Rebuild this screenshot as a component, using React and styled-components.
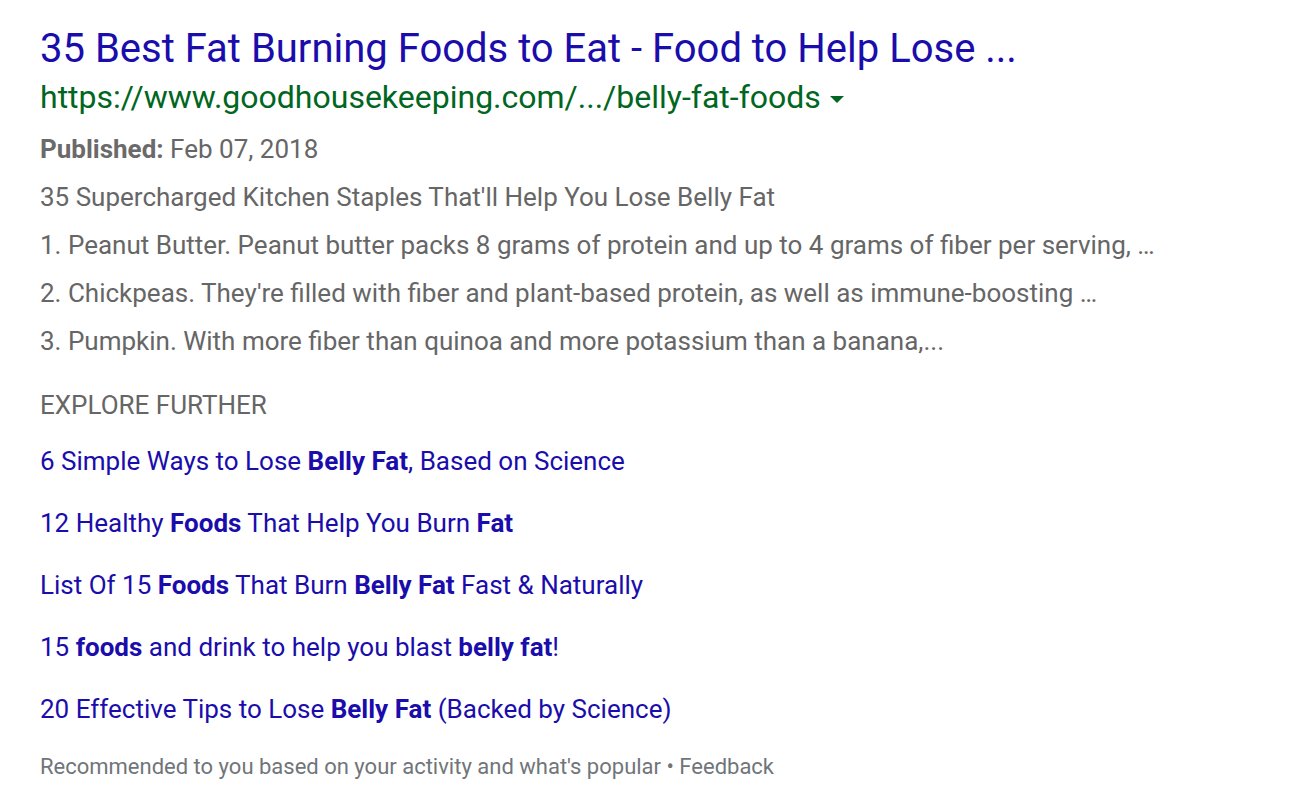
import React from "react";
import styled, { createGlobalStyle } from "styled-components";

const GlobalStyle = createGlobalStyle`
  body {
    margin: 0;
    background: #fff;
    font-family: Roboto, "Liberation Sans", Arial, sans-serif;
  }
`;

const Result = styled.div`
  padding: 24px 40px 0;
  display: flex;
  flex-direction: column;
`;

const Title = styled.a`
  color: #1a0dab;
  font-size: 40px;
  line-height: 50px;
  text-decoration: none;
`;

const Url = styled.div`
  display: flex;
  align-items: center;
  color: #006621;
  font-size: 32px;
  line-height: 46px;
`;

const Caret = styled.span`
  display: inline-block;
  margin-left: 9px;
  margin-top: 4px;
  width: 0;
  height: 0;
  border-left: 7px solid transparent;
  border-right: 7px solid transparent;
  border-top: 7px solid #006621;
`;

const Snippet = styled.div`
  margin-top: 5px;
  color: #666;
  font-size: 26px;
  line-height: 48px;
`;

const Line = styled.div`
  white-space: nowrap;
`;

const Label = styled.b`
  color: #6a6a6a;
  font-weight: 700;
`;

const Explore = styled.div`
  margin-top: 16px;
  color: #666;
  font-size: 26px;
  line-height: 48px;
`;

const Links = styled.div`
  display: flex;
  flex-direction: column;
  gap: 14px;
  margin-top: 8px;
`;

const LinkItem = styled.a`
  color: #1a0dab;
  font-size: 26px;
  line-height: 48px;
  text-decoration: none;

  b {
    font-weight: 700;
  }
`;

const Footer = styled.div`
  margin-top: 14px;
  color: #70757a;
  font-size: 22px;
  line-height: 40px;
`;

const links = [
  <>6 Simple Ways to Lose <b>Belly Fat</b>, Based on Science</>,
  <>12 Healthy <b>Foods</b> That Help You Burn <b>Fat</b></>,
  <>List Of 15 <b>Foods</b> That Burn <b>Belly Fat</b> Fast &amp; Naturally</>,
  <>15 <b>foods</b> and drink to help you blast <b>belly fat</b>!</>,
  <>20 Effective Tips to Lose <b>Belly Fat</b> (Backed by Science)</>,
];

export default function App() {
  return (
    <>
      <GlobalStyle />
      <Result>
        <Title href="#">35 Best Fat Burning Foods to Eat - Food to Help Lose ...</Title>
        <Url>
          https://www.goodhousekeeping.com/.../belly-fat-foods
          <Caret />
        </Url>
        <Snippet>
          <Line><Label>Published:</Label> Feb 07, 2018</Line>
          <Line>35 Supercharged Kitchen Staples That'll Help You Lose Belly Fat</Line>
          <Line>1. Peanut Butter. Peanut butter packs 8 grams of protein and up to 4 grams of fiber per serving, …</Line>
          <Line>2. Chickpeas. They're filled with fiber and plant-based protein, as well as immune-boosting …</Line>
          <Line>3. Pumpkin. With more fiber than quinoa and more potassium than a banana,...</Line>
        </Snippet>
        <Explore>EXPLORE FURTHER</Explore>
        <Links>
          {links.map((l, i) => (
            <LinkItem key={i} href="#">{l}</LinkItem>
          ))}
        </Links>
        <Footer>Recommended to you based on your activity and what's popular • Feedback</Footer>
      </Result>
    </>
  );
}
